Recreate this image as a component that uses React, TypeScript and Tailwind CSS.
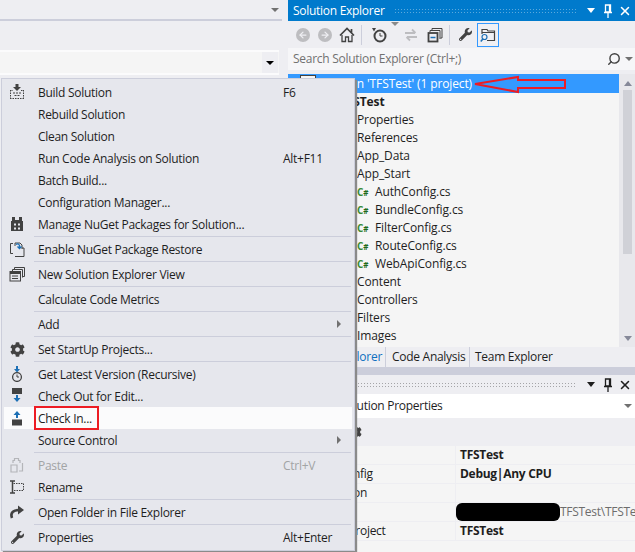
import { type ReactNode } from "react";
import { FaCog, FaWrench } from "react-icons/fa";
import { ArrowLeft, ArrowRight, Search, X } from "lucide-react";

type MenuEntry = {
  label: string;
  shortcut?: string;
  icon?: ReactNode;
  submenu?: boolean;
  disabled?: boolean;
  active?: boolean;
  separator?: boolean;
};

function Svg({ children }: { children: ReactNode }) {
  return (
    <svg width="16" height="16" viewBox="0 0 16 16" fill="none">
      {children}
    </svg>
  );
}

const BuildIcon = (
  <Svg>
    <path d="M6.5 0h3v3H12L8 7 4 3h2.5z" fill="#424242" />
    <path d="M1 6.5h3M12 6.5h3M1.5 6v9M14.5 6v9M1 14.5h14" stroke="#424242" strokeDasharray="1.5 1" />
    <path d="M4 9h2M7 9h2M10 9h2M5.5 11.5h2M8.5 11.5h2" stroke="#424242" />
  </Svg>
);

const NugetIcon = (
  <Svg>
    <path d="M3 1h3v3h4V1h3v4h1v10H2V5h1z" fill="#424242" />
    <path d="M5 7.5h2v2H5zM9 7.5h2v2H9zM5 11.5h2v2H5zM9 11.5h2v2H9z" fill="#e6e7ed" />
  </Svg>
);

const RestoreIcon = (
  <Svg>
    <path d="M4 2.5H1.5v10H4M6 15.5h9V7h-2" stroke="#424242" />
    <path d="M6 5V2h5l2 2v4" stroke="#424242" />
    <path d="M7 3.5c2-1.5 4 0 3.5 2.5M8.5 5.5l2 2 2-2" stroke="#1c6fb5" strokeWidth="1.4" />
  </Svg>
);

const NewViewIcon = (
  <Svg>
    <path d="M5.5 3.5v-2h10v9h-2" stroke="#424242" />
    <path d="M3.5 5.5v-2h10v8" stroke="#424242" />
    <rect x="1" y="5.5" width="10.5" height="9.5" stroke="#424242" />
    <path d="M1 7h10.5" stroke="#424242" strokeWidth="2" />
    <path d="M3 10h6M3 12.5h6" stroke="#424242" />
  </Svg>
);

const LatestIcon = (
  <Svg>
    <path d="M7 0h2v3h2L8 6.5 5 3h2z" fill="#1c6fb5" />
    <circle cx="8" cy="11" r="4.4" stroke="#424242" strokeWidth="1.3" />
    <path d="M8 8.5V11h2" stroke="#424242" />
  </Svg>
);

const CheckOutIcon = (
  <Svg>
    <rect x="3" y="0" width="10" height="6" fill="#424242" />
    <path d="M7 7h2v3h2.500L8 14 4.500 10H7z" fill="#1c6fb5" />
  </Svg>
);

const CheckInIcon = (
  <Svg>
    <path d="M8 1l3.500 4H9v3H7V5H4.500z" fill="#1c6fb5" />
    <rect x="3" y="9.500" width="10" height="6" fill="#424242" />
  </Svg>
);

const PasteIcon = (
  <Svg>
    <path d="M4 6V3.500h1.500V1.500h4v2H11V6M2 8h6v7H2zM10 14h3.500V6" stroke="#b4b5b9" strokeWidth="1.200" />
  </Svg>
);

const RenameIcon = (
  <Svg>
    <path d="M4.500 4.500h10v7h-10" stroke="#424242" strokeDasharray="1.500 1" />
    <path d="M1 2h5M1 14h5M3.500 2v12" stroke="#424242" strokeWidth="1.500" />
  </Svg>
);

const OpenFolderIcon = (
  <Svg>
    <path d="M3 14C1 9 4 6 10 6" stroke="#424242" strokeWidth="2.600" />
    <path d="M9 1.500l6 4.500-6 4.500z" fill="#424242" />
  </Svg>
);

const menu: MenuEntry[] = [
  { label: "Build Solution", shortcut: "F6", icon: BuildIcon },
  { label: "Rebuild Solution" },
  { label: "Clean Solution" },
  { label: "Run Code Analysis on Solution", shortcut: "Alt+F11" },
  { label: "Batch Build..." },
  { label: "Configuration Manager..." },
  { label: "Manage NuGet Packages for Solution...", icon: NugetIcon },
  { separator: true, label: "" },
  { label: "Enable NuGet Package Restore", icon: RestoreIcon },
  { separator: true, label: "" },
  { label: "New Solution Explorer View", icon: NewViewIcon },
  { separator: true, label: "" },
  { label: "Calculate Code Metrics" },
  { separator: true, label: "" },
  { label: "Add", submenu: true },
  { separator: true, label: "" },
  { label: "Set StartUp Projects...", icon: <FaCog size={15} color="#424242" /> },
  { separator: true, label: "" },
  { label: "Get Latest Version (Recursive)", icon: LatestIcon },
  { label: "Check Out for Edit...", icon: CheckOutIcon },
  { label: "Check In...", icon: CheckInIcon, active: true },
  { label: "Source Control", submenu: true },
  { separator: true, label: "" },
  { label: "Paste", shortcut: "Ctrl+V", icon: PasteIcon, disabled: true },
  { label: "Rename", icon: RenameIcon },
  { separator: true, label: "" },
  { label: "Open Folder in File Explorer", icon: OpenFolderIcon },
  { separator: true, label: "" },
  { label: "Properties", shortcut: "Alt+Enter", icon: <FaWrench size={13} color="#424242" /> },
];

const csFiles = ["AuthConfig.cs", "BundleConfig.cs", "FilterConfig.cs", "RouteConfig.cs", "WebApiConfig.cs"];

const properties = [
  { name: "(Name)", value: "TFSTest", bold: true },
  { name: "Active config", value: "Debug|Any CPU", bold: true },
  { name: "Description", value: "" },
  { name: "Path", value: "TFSTest\\TFSTe", path: true },
  { name: "Startup project", value: "TFSTest", bold: true },
];

function Caret({ color = "#1e1e1e" }: { color?: string }) {
  return <span className="h-0 w-0 border-x-[4px] border-t-[4px] border-x-transparent" style={{ borderTopColor: color }} />;
}

function PanelButtons({ color }: { color: string }) {
  return (
    <div className="flex items-center">
      <svg width="10" height="6" viewBox="0 0 10 6"><path d="M1 0h8L5 5z" fill={color} /></svg>
      <svg className="ml-[7px]" width="10" height="14" viewBox="0 0 10 14" fill="none">
        <path d="M2.500 1h5v7h-5zM1 8.500h8M5 8.500V14M6.500 1v7" stroke={color} strokeWidth="1.300" />
      </svg>
      <X className="ml-[5px]" size={14} color={color} strokeWidth={2.6} />
    </div>
  );
}

function ToolbarIcons() {
  return (
    <div className="flex h-[27px] items-center pl-[8px]">
      <span className="flex h-3.5 w-3.5 items-center justify-center rounded-full bg-[#bdbdc0]"><ArrowLeft size={10} color="#eeeef2" strokeWidth={3} /></span>
      <span className="ml-2 flex h-3.5 w-3.5 items-center justify-center rounded-full bg-[#bdbdc0]"><ArrowRight size={10} color="#eeeef2" strokeWidth={3} /></span>
      <svg className="ml-[7px]" width="16" height="16" viewBox="0 0 16 16" fill="none">
        <path d="M1 8.500 8 1.500l7 7M12.500 2v3.500" stroke="#424242" strokeWidth="1.700" />
        <path d="M3 8v6.500h3.500V10h3v4.500H13V8" stroke="#424242" strokeWidth="1.300" />
      </svg>
      <span className="ml-[6px] h-[20px] w-px bg-[#cccedb]" />
      <svg className="ml-[9px]" width="16" height="16" viewBox="0 0 16 16" fill="none">
        <path d="M1 1h4L3 4.500z" fill="#424242" />
        <circle cx="9" cy="9" r="5.500" stroke="#424242" strokeWidth="2" />
        <path d="M9 6v3h2.500" stroke="#424242" />
      </svg>
      <span className="ml-[4px]"><Caret color="#8a8a8a" /></span>
      <svg className="ml-[5px]" width="14" height="14" viewBox="0 0 14 14" fill="none">
        <path d="M1 5h10M8 1.500 11.500 5M13 9H3M6 12.500 2.500 9" stroke="#bdbdc0" strokeWidth="1.800" />
      </svg>
      <svg className="ml-[9px]" width="16" height="16" viewBox="0 0 16 16" fill="none">
        <path d="M5 3V1.500h10V11h-1.500M3 5V3.500h10V12" stroke="#424242" />
        <rect x="1.500" y="6" width="9" height="8.500" stroke="#424242" strokeWidth="1.800" />
        <path d="M3.500 10.500h5" stroke="#1c6fb5" strokeWidth="1.500" />
      </svg>
      <span className="ml-[6px] h-[20px] w-px bg-[#cccedb]" />
      <FaWrench className="ml-[9px]" size={13} color="#424242" />
      <span className="ml-[5px] flex h-[24px] w-[22px] items-center justify-center border border-[#3399ff] bg-[#f0f0f4]">
        <svg width="16" height="16" viewBox="0 0 16 16" fill="none">
          <path d="M2 7V2.500h5l1 1.500h6.500v9.500H7M2 5.500h12.500" stroke="#424242" strokeWidth="1.200" />
          <circle cx="4.500" cy="10" r="2.500" stroke="#1c6fb5" strokeWidth="1.200" />
          <path d="M2.800 12 .8 14.500" stroke="#1c6fb5" strokeWidth="1.500" />
        </svg>
      </span>
    </div>
  );
}

function Menu() {
  return (
    <div className="absolute top-[78px] left-[1px] w-[354px] border border-[#cccedb] bg-[#e6e7ed] px-[2px] py-[2px] tracking-[-0.28px] text-[#1e1e1e] shadow-[2px_2px_1px_#8a8a8a]">
      {menu.map((item, index) =>
        item.separator ? (
          <div key={index} className="ml-[30px] mr-[1px] flex h-[3px] items-center">
            <span className="h-px w-full bg-[#cccedb]" />
          </div>
        ) : (
          <div key={item.label} className={`flex h-[22px] items-center ${item.active ? "bg-[#fbfbfc]" : ""} ${item.disabled ? "text-[#a2a4a5]" : ""}`}>
            <span className="flex w-[26px] justify-center">{item.icon}</span>
            <span className="w-[253px] pl-2 pt-[2px]">{item.label}</span>
            <span className="w-[54px] pt-[2px]">{item.shortcut}</span>
            {item.submenu ? <span className="h-0 w-0 border-y-[4px] border-l-[4px] border-y-transparent border-l-[#717171]" /> : null}
          </div>
        ),
      )}
    </div>
  );
}

export default function App() {
  return (
    <div className="relative flex h-[552px] w-[635px] overflow-hidden bg-[#eeeef2] font-['Open_Sans',sans-serif] text-[12px] leading-4 tracking-[-0.28px] text-[#1e1e1e]">
      <div className="w-[288px] shrink-0">
        <div className="mr-[6px] flex h-[21px] items-center justify-end border-b-2 border-[#cccedb] pr-[3px]">
          <Caret color="#717171" />
        </div>
        <div className="mt-[29px] mr-[9px] flex h-[25px] items-center justify-end border-y-2 border-[#fbfbfc] bg-[#f5f5f5] pr-[1px]">
          <span className="flex h-[21px] w-[16px] items-center justify-center bg-[#eeeef2]"><Caret color="#000" /></span>
        </div>
      </div>

      <div className="flex min-w-0 flex-1 flex-col">
        <div className="flex h-[21px] items-center bg-[#007acc] pl-[5px] pr-[3px] text-white">
          <span>Solution Explorer</span>
          <div className="mx-[9px] h-[5px] flex-1 bg-[radial-gradient(#5ba9dd_1px,transparent_1px)] bg-[length:3px_3px]" />
          <PanelButtons color="#ffffff" />
        </div>
        <ToolbarIcons />
        <div className="flex h-[22px] items-center justify-between bg-[#f6f6f8] pl-[5px] pr-[2px] text-[#717171]">
          <span>Search Solution Explorer (Ctrl+;)</span>
          <div className="flex items-center gap-[4px]">
            <Search className="-scale-x-100" size={14} color="#424242" strokeWidth={2.4} />
            <Caret color="#717171" />
          </div>
        </div>

        <div className="mt-[4px] flex h-[273px] tracking-[-0.12px]">
          <div className="flex-1 bg-[#f5f5f5]">
            <div className="flex h-[19px] items-center bg-[#3399ff] pl-[12px] text-white">
              <span className="mr-[3px] h-[17px] w-[16px] border border-[#424242] bg-[#f5f5f5]" />
              Solution 'TFSTest' (1 project)
            </div>
            <div className="flex h-[18px] items-center pl-[52px] font-bold">TFSTest</div>
            {["Properties", "References", "App_Data", "App_Start"].map((name) => (
              <div key={name} className="flex h-[18px] items-center pl-[69px]">{name}</div>
            ))}
            {csFiles.map((name) => (
              <div key={name} className="flex h-[18px] items-center pl-[69px]">
                <span className="w-[18px] text-[10px] leading-none font-bold text-[#388a34]">C<span className="text-[8px] text-[#1e6b1a]">#</span></span>
                {name}
              </div>
            ))}
            {["Content", "Controllers", "Filters", "Images"].map((name) => (
              <div key={name} className="flex h-[18px] items-center pl-[69px]">{name}</div>
            ))}
          </div>
          <div className="flex w-[16px] flex-col items-center bg-[#e8e8ec] pl-[1px]">
            <span className="mt-[7px] h-0 w-0 border-x-[4.500px] border-b-[5px] border-x-transparent border-b-[#868999]" />
            <span className="mt-[4px] h-[164px] w-[9px] bg-[#d0d1d7]" />
            <span className="mt-auto mb-[6px] h-0 w-0 border-x-[4.500px] border-t-[5px] border-x-transparent border-t-[#868999]" />
          </div>
        </div>

        <div className="flex h-[20px] items-center">
          <span className="w-[98px] border-r border-[#cccedb] pr-[3px] text-right leading-[20px] text-[#0e70c0]">Solution Explorer</span>
          <span className="w-[84px] border-r border-[#cccedb] pl-[6px] leading-[20px]">Code Analysis</span>
          <span className="pl-[5px]">Team Explorer</span>
        </div>
        <div className="h-[8px] bg-[#cccedb]" />

        <div className="flex h-[19px] items-center pl-[5px] pr-[3px]">
          <span className="invisible">Properties</span>
          <div className="mx-[9px] h-[5px] flex-1 bg-[radial-gradient(#a5a5a8_1px,transparent_1px)] bg-[length:3px_3px]" />
          <PanelButtons color="#1e1e1e" />
        </div>
        <div className="flex h-[24px] items-center justify-between bg-white pl-[9px] pr-[3px]">
          <span>TFSTest Solution Properties</span>
          <Caret color="#717171" />
        </div>
        <div className="flex h-[28px] items-center pl-[60px]">
          <FaCog size={14} color="#424242" />
        </div>
        <div className="flex-1 bg-[#f5f5f5]">
          {properties.map((row) => (
            <div key={row.name} className="flex h-[19px] items-center border-b border-[#eeeef2]">
              <span className="w-[168px] shrink-0 border-r border-[#eeeef2] pl-[18px] leading-[18px]">{row.name}</span>
              {row.path ? (
                <span className="flex items-center whitespace-nowrap text-[#6d6d6d]">
                  <span className="h-[18px] w-[104px] shrink-0 rounded-[6px] bg-black" />
                  {row.value}
                </span>
              ) : (
                <span className={`pl-[4px] ${row.bold ? "font-bold" : ""}`}>{row.value}</span>
              )}
            </div>
          ))}
        </div>
      </div>

      <Menu />

      <span className="absolute top-[406px] left-[34px] h-[24px] w-[65px] border-2 border-[#ed1c24]" />
      <svg className="absolute top-[74px] left-[472px]" width="96" height="20" viewBox="0 0 96 20" fill="none">
        <path d="M3 10 46 3v3h47v8H46v4z" stroke="#ed1c24" strokeWidth="2" />
      </svg>
    </div>
  );
}
